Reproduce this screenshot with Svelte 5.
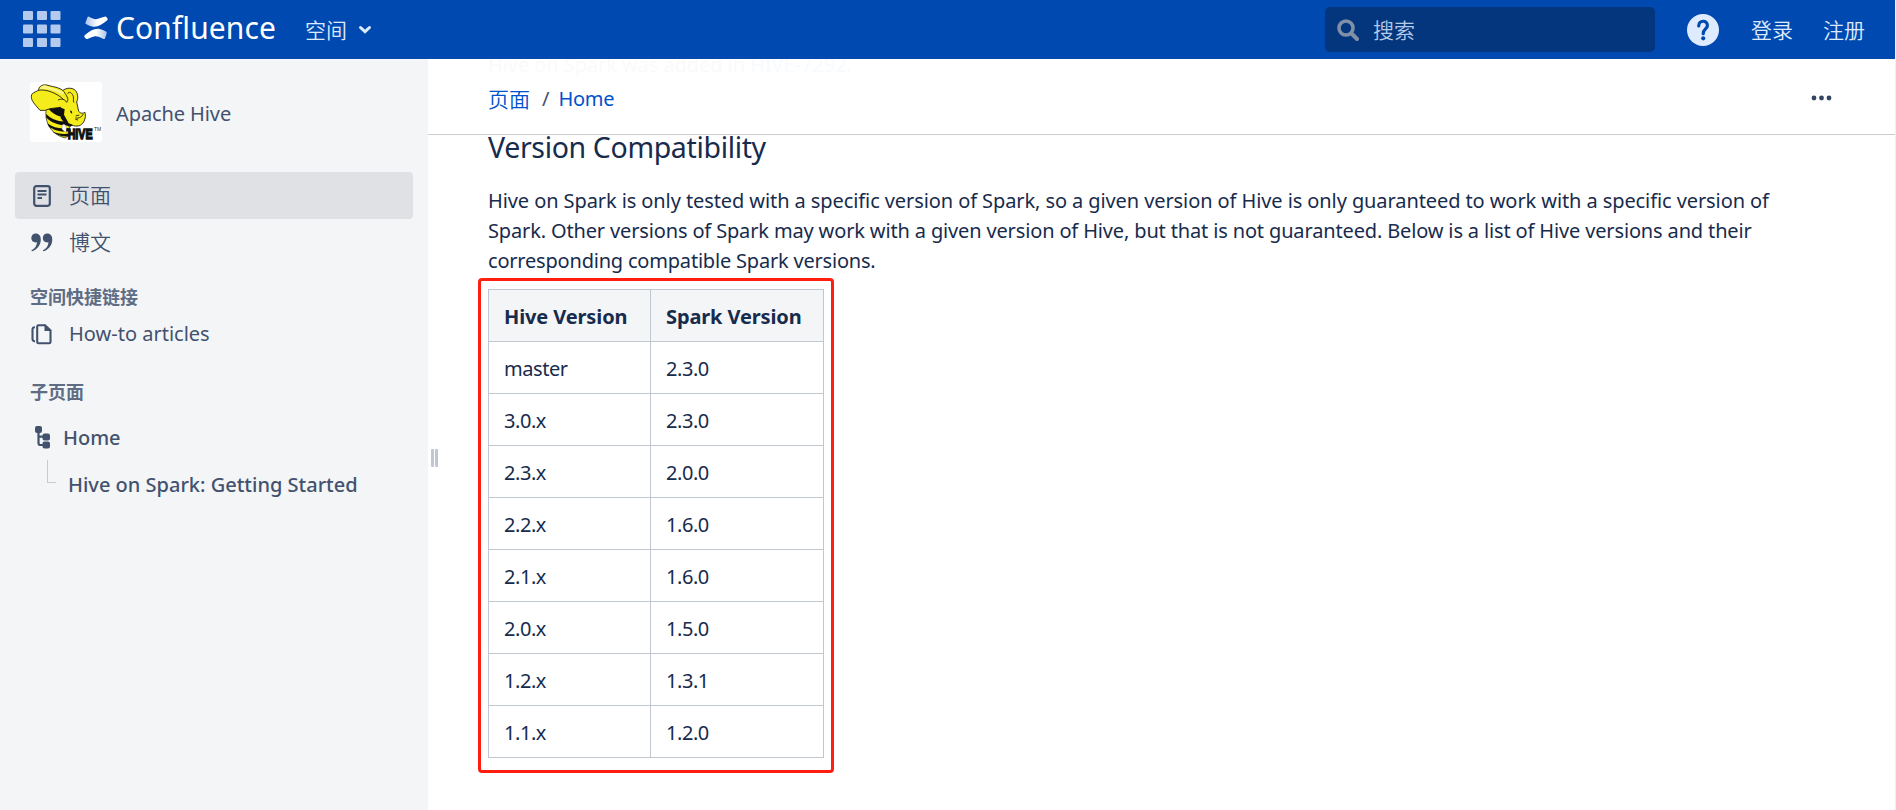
<script>
  const rows = [
    ['master', '2.3.0'],
    ['3.0.x', '2.3.0'],
    ['2.3.x', '2.0.0'],
    ['2.2.x', '1.6.0'],
    ['2.1.x', '1.6.0'],
    ['2.0.x', '1.5.0'],
    ['1.2.x', '1.3.1'],
    ['1.1.x', '1.2.0'],
  ];
</script>

<div class="app">
  <header class="top">
    <svg class="apps" width="38" height="36" viewBox="0 0 38 36">
      {#each [0, 13.5, 27] as y}
        {#each [0, 14, 27.5] as x}
          <rect {x} {y} width="10" height="9" rx="1" fill="#b3caee" />
        {/each}
      {/each}
    </svg>
    <svg class="mark" width="24" height="24" viewBox="0 0 24 24">
      <defs>
        <linearGradient id="ga" x1="1" y1="0" x2="0.2" y2="0"><stop offset="0" stop-color="#a9c2ea" /><stop offset=".6" stop-color="#fff" /></linearGradient>
        <linearGradient id="gb" x1="0" y1="0" x2=".9" y2="0"><stop offset="0" stop-color="#a9c2ea" /><stop offset=".6" stop-color="#fff" /></linearGradient>
      </defs>
      <path d="M3.500 1.200Q4 .3 4.900.8C9 3 11.500 3.700 14 2.700Q17 1.700 20.500.8Q22 .2 22.500 1.200L23.600 2.700Q24 3.700 23 4.500C17.500 9 13 11.700 8 10.500Q5 9.700 2 8.100Q1 7.500 1.500 6.400Z" fill="url(#gb)" />
      <path d="M21 22.400Q20.300 23.400 19.400 22.900C15 20.600 12.500 19.600 10 20.500Q7 21.500 3.500 22.900Q2.200 23.400 1.400 22.300L.3 20.700Q0 19.700 1 18.900C7 14.300 11 12 15.800 13.100Q19 14 22 15.500Q23 16.100 22.700 17.200Z" fill="url(#ga)" />
    </svg>
    <span class="brand">Confluence</span>
    <span class="spaces cn">空间</span>
    <svg class="chev" width="14" height="10" viewBox="0 0 14 10"><path d="M2.500 2.500L7 6.700L11.500 2.500" fill="none" stroke="#deebff" stroke-width="3" stroke-linecap="round" /></svg>
    <div class="search">
      <svg width="22" height="22" viewBox="0 0 22 22"><circle cx="9" cy="9" r="7" fill="none" stroke="#8090a6" stroke-width="3.600" /><path d="M14.500 14.500L20 20" stroke="#8090a6" stroke-width="4" stroke-linecap="round" /></svg>
      <span class="cn">搜索</span>
    </div>
    <svg class="help" width="32" height="32" viewBox="0 0 32 32"><circle cx="16" cy="16" r="16" fill="#deebff" /><path d="M11.700 12C11.700 5.800 20.400 5.800 20.400 11.400C20.400 15 16.200 15 16.200 19.700" fill="none" stroke="#0049b0" stroke-width="3.200" stroke-linecap="round" /><circle cx="16.200" cy="24.300" r="2.100" fill="#0049b0" /></svg>
    <span class="login cn">登录</span>
    <span class="cn">注册</span>
  </header>

  <div class="body">
    <aside>
      <div class="space">
        <svg class="logo" width="72" height="60" viewBox="0 0 216 180">
          <rect width="216" height="180" rx="10" fill="#fff" />
          <path d="M49 82C42 118 62 158 106 168L124 154L112 118L92 76Z" fill="#f5ec1b" stroke="#111" stroke-width="2" />
          <path d="M56 80L92 76L102 104C84 104 66 94 56 80ZM49 96C64 112 86 120 110 118L114 130C88 132 62 122 48 106ZM52 124C70 138 94 142 116 138L120 147C98 152 70 144 57 134ZM66 148C82 156 102 158 122 154L118 163C98 166 80 160 66 148Z" fill="#111" />
          <path d="M90 40C94 20 118 14 132 22C144 30 146 48 140 60L146 88C154 96 158 94 165 91C170 108 160 130 144 132C134 134 126 128 120 130C106 122 94 104 90 78Z" fill="#f5ec1b" stroke="#111" stroke-width="2.500" stroke-linejoin="round" />
          <path d="M30 85C14 66 0 54 5 38C10 28 24 30 26 22C28 12 38 7 50 9C74 16 96 16 105 34C112 44 117 54 110 61C104 54 98 54 94 60L92 76L60 80Q44 88 30 85Z" fill="#f5ec1b" />
          <path d="M110 61C104 50 92 50 84 54M92 76L60 80Q44 88 30 85C14 66 0 54 5 38C10 28 24 30 26 22C28 12 38 7 50 9C74 16 96 16 105 34C112 44 117 54 110 61" fill="none" stroke="#111" stroke-width="2.500" />
          <path d="M28 24C46 16 74 26 98 38L102 30C80 22 58 16 44 10C34 12 32 18 28 24Z" fill="#faf68c" />
          <path d="M24 25C48 20 82 34 101 53M113 35C116 28 126 30 130 44C132 50 128 56 132 62M136 108C148 110 156 104 160 96M137 102L148 99M136 112L144 114" fill="none" stroke="#111" stroke-width="2.500" />
          <path d="M90 76L104 82L102 98L116 124L128 128L122 134L108 130L92 108ZM120 86Q126 84 127 94Q122 96 120 86Z" fill="#111" />
          <path d="M97 128Q104 124 109 134L108 152L96 142Z" fill="#fff" stroke="#777" stroke-width="1" />
          <text transform="translate(113 172) scale(1 1.450)" font-family="Liberation Sans" font-weight="700" font-size="32" fill="#111" stroke="#111" stroke-width="3">HIVE</text>
          <text x="192" y="147" font-family="Liberation Sans" font-size="15" fill="#333">TM</text>
        </svg>
        <span class="spacename">Apache Hive</span>
      </div>
      <nav>
        <div class="item sel">
          <span class="ico"><svg width="18" height="22" viewBox="0 0 18 22"><rect x="1.200" y="1.200" width="15.600" height="19.600" rx="2.200" fill="none" stroke="#42526e" stroke-width="2.200" /><path d="M4.500 6H13.500M4.500 9.500H13.500M4.500 13H9" stroke="#42526e" stroke-width="2" /></svg></span>
          <span class="cn">页面</span>
        </div>
        <div class="item">
          <span class="ico"><svg width="22" height="19" viewBox="0 0 22 19"><path d="M4.700.5C8 .5 9.800 3 9.800 6.500C9.800 12.500 5.500 17 1 18.300Q.2 18.300.6 17.300C4 15.500 5.700 13 6 9.300C2.500 10 .3 7.800.3 5C.3 2.500 2.200.5 4.700.5ZM16.200.5C19.500.5 21.300 3 21.300 6.500C21.300 12.500 17 17 12.500 18.300Q11.700 18.300 12.100 17.300C15.500 15.500 17.200 13 17.500 9.300C14 10 11.800 7.800 11.800 5C11.800 2.500 13.700.5 16.200.5Z" fill="#42526e" /></svg></span>
          <span class="cn">博文</span>
        </div>
      </nav>
      <h5 class="h1">空间快捷链接</h5>
      <div class="item how">
        <span class="ico"><svg width="21" height="21" viewBox="0 0 21 21"><path d="M6.200 2.500Q6.200 1.200 7.500 1.200H14L19.500 6.500V18Q19.500 19.300 18.200 19.300H7.500Q6.200 19.300 6.200 18Z" fill="none" stroke="#42526e" stroke-width="2.100" /><path d="M13.500 0V7H20.500Z" fill="#42526e" /><path d="M4 3.200Q1.500 3.200 1.500 5.500V15Q1.500 17 4 17.500" fill="none" stroke="#42526e" stroke-width="2.100" /></svg></span>
        <span>How-to articles</span>
      </div>
      <h5 class="h2">子页面</h5>
      <div class="parent">
        <svg width="16" height="24" viewBox="0 0 16 24"><path d="M3.500 4V18Q3.500 20 5.500 20H9M3.500 11.700H9" fill="none" stroke="#42526e" stroke-width="2.200" /><rect x="0" y="1" width="7" height="7" rx="2" fill="#42526e" /><rect x="7.500" y="8.500" width="7.500" height="7" rx="2" fill="#42526e" /><rect x="7.500" y="16.500" width="7.500" height="7" rx="2" fill="#42526e" /></svg>
        <span class="home">Home</span>
      </div>
      <div class="child"><i></i><span class="getting">Hive on Spark: Getting Started</span></div>
    </aside>
    <div class="grip"><i></i><i></i></div>
    <main>
      <div class="crumbs">
        <div class="ghost">Hive on Spark was added in <b>HIVE-7292.</b></div>
        <div class="trail">
          <span class="cn link">页面</span><span class="slash">/</span><span class="link hm">Home</span>
          <svg class="dots" width="22" height="6" viewBox="0 0 22 6"><circle cx="3" cy="3" r="2.400" /><circle cx="10.500" cy="3" r="2.400" /><circle cx="18" cy="3" r="2.400" /></svg>
        </div>
      </div>
      <div class="content">
        <h2>Version Compatibility</h2>
        <p>
          <span class="l1">Hive on Spark is only tested with a specific version of Spark, so a given version of Hive is only guaranteed to work with a specific version of</span>
          <span class="l2">Spark. Other versions of Spark may work with a given version of Hive, but that is not guaranteed. Below is a list of Hive versions and their</span>
          <span class="l3">corresponding compatible Spark versions.</span>
        </p>
        <div class="frame">
          <table>
            <thead><tr><th>Hive Version</th><th>Spark Version</th></tr></thead>
            <tbody>
              {#each rows as [h, s]}<tr><td>{h}</td><td>{s}</td></tr>{/each}
            </tbody>
          </table>
        </div>
      </div>
    </main>
  </div>
</div>

<style>
  :global(body) { margin: 0; background: #fff; }
  .app { width: 1896px; height: 810px; overflow: hidden; display: flex; flex-direction: column; box-sizing: border-box; border-right: 1px solid #f0f0f0; font: 400 20px/30px "Noto Sans", "Noto Sans CJK SC", sans-serif; color: #172b4d; }
  .app * { box-sizing: border-box; }
  svg { display: block; flex: none; }
  span { white-space: nowrap; }
  .cn { font-family: "Noto Sans CJK SC", sans-serif; font-weight: 350; font-size: 21px; padding-bottom: 2px; }
  .top { height: 59px; flex: none; background: #0049b0; display: flex; align-items: center; padding: 0 30px 0 23px; color: #deebff; }
  .apps { margin-bottom: 1px; }
  .mark { margin: 0 0 3px 23px; }
  .brand { margin: 0 0 4px 8px; font-size: 30px; line-height: 40px; letter-spacing: .1px; color: #fff; width: 160px; }
  .spaces { margin-left: 29px; }
  .chev { margin-left: 11px; }
  .search { margin-left: auto; width: 330px; height: 45px; border-radius: 5px; background: #04367d; display: flex; align-items: center; padding-left: 12px; gap: 14px; color: #b3cae9; }
  .help { margin-left: 32px; }
  .login { margin: 0 30px 0 32px; }
  .body { flex: 1; display: flex; min-height: 0; }
  aside { width: 428px; flex: none; background: #f4f5f7; padding: 23px 15px 0; color: #42526e; }
  .space { display: flex; align-items: center; gap: 14px; padding-left: 15px; margin-bottom: 30px; }
  .spacename { padding-top: 3px; letter-spacing: -.1px; }
  .item { height: 47px; border-radius: 4px; display: flex; align-items: center; }
  .item .ico { width: 54px; padding-left: 18px; }
  .item:not(.sel) .ico { padding-left: 16px; }
  .item .cn { padding-bottom: 4px; }
  .sel { background: #dfe1e5; }
  h5 { margin: 0; padding-left: 15px; font: 700 18px/24px "Noto Sans CJK SC", sans-serif; color: #5e6c84; }
  .h1 { margin-top: 18px; }
  .how { height: 50px; padding-top: 2px; }
  .h2 { margin-top: 21px; }
  .parent { display: flex; align-items: center; gap: 12px; padding-left: 20px; height: 46px; margin-top: 11px; font-weight: 500; }
  .home { padding-top: 2px; }
  .child { display: flex; height: 47px; align-items: center; padding-left: 32px; gap: 12px; font-weight: 500; }
  .getting { padding-top: 2px; }
  .child i { width: 9px; height: 23px; border: solid #c8cbd1; border-width: 0 0 1px 1px; margin-bottom: 25px; }
  .grip { width: 10px; display: flex; gap: 1px; padding: 390px 0 0 3px; }
  .grip i { width: 3px; height: 18px; background: #c1c7d0; border-radius: 1px; }
  main { flex: 1; min-width: 0; margin-left: -10px; }
  .crumbs { height: 76px; border-bottom: 1px solid #ccc; padding-left: 60px; overflow: hidden; }
  .ghost { height: 25px; line-height: 12px; letter-spacing: -.07px; color: #fafafb; }
  .ghost b { font-weight: inherit; color: #f7fbff; }
  .trail { display: flex; align-items: center; height: 30px; color: #42526e; }
  .trail .cn { padding-bottom: 3px; }
  .link { color: #0052cc; }
  .hm { letter-spacing: -.3px; }
  .slash { margin: 0 9px 0 12px; }
  .dots { margin: 0 62px 2px auto; fill: #344563; }
  .content { padding-left: 50px; }
  h2 { margin: -6px 0 0 10px; font-size: 28.500px; line-height: 36px; font-weight: 400; letter-spacing: -.35px; height: 57px; }
  p { margin: 0 0 0 10px; }
  p span { display: block; }
  .l1 { letter-spacing: -.09px; }
  .l2 { letter-spacing: -.147px; }
  .l3 { letter-spacing: -.2px; }
  .frame { width: 356px; height: 495px; margin-top: 2px; border: 3px solid #ff1e10; border-radius: 4px; padding: 8px 7px; }
  table { border-collapse: collapse; width: 336px; table-layout: fixed; }
  th, td { border: 1px solid #c1c7d0; height: 52px; padding: 2px 0 0 15px; text-align: left; letter-spacing: -.45px; }
  th { background: #f4f5f7; font-weight: 700; letter-spacing: -.12px; }
  th:first-child { width: 162px; }
</style>
